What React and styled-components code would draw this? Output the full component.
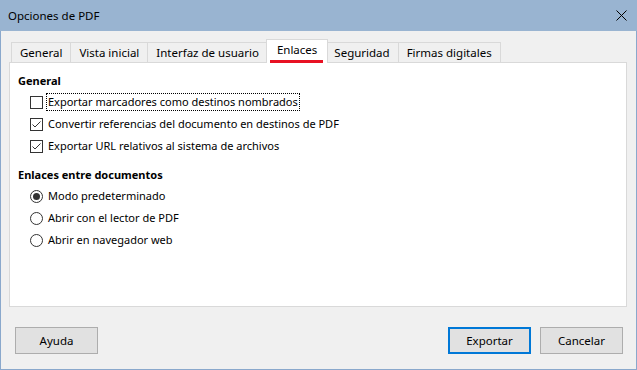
import React, { useState } from "react";
import styled, { createGlobalStyle, css } from "styled-components";

const Global = createGlobalStyle`
  html, body { margin: 0; padding: 0; background: #f0f0f0; }
  body { font-family: "Segoe UI", "Noto Sans", sans-serif; font-size: 11px; color: #000; }
  * { box-sizing: border-box; }
`;

const Window = styled.div`
  width: 637px;
  height: 370px;
  display: flex;
  flex-direction: column;
  background: #f0f0f0;
  border: 1px solid #8aa8cc;
  border-top: none;
`;

const TitleBar = styled.div`
  height: 31px;
  margin: 0 -1px;
  background: #99b4d1;
  display: flex;
  align-items: center;
  justify-content: space-between;
  padding: 0 10px 1px 8px;
`;

const Title = styled.span`
  font-size: 11.5px;
  color: #000;
`;

const CloseBtn = styled.div`
  width: 12px;
  height: 12px;
  display: flex;
  align-items: center;
  justify-content: center;
`;

const Body = styled.div`
  flex: 1;
  display: flex;
  flex-direction: column;
  padding: 8px 8px 0 8px;
`;

const TabBar = styled.div`
  height: 23px;
  display: flex;
  align-items: flex-end;
  padding-left: 2px;
  position: relative;
  z-index: 1;
`;

const Tab = styled.div`
  height: 20px;
  padding: 0 8px 1px;
  display: flex;
  align-items: center;
  justify-content: center;
  border: 1px solid #d9d9d9;
  border-bottom: none;
  border-left-width: ${(p) => (p.$first ? "1px" : "0")};
  background: #f0f0f0;
  font-size: 11.5px;
  color: #000;
  white-space: nowrap;
  position: relative;
  ${(p) =>
    p.$active &&
    css`
      height: 24px;
      margin-bottom: -1px;
      background: #fff;
      border-left-width: 1px;
      margin-left: -2px;
      margin-right: -2px;
      padding: 0 10px 4px;
      z-index: 2;
    `}
`;

const Underline = styled.span`
  position: absolute;
  left: 3px;
  right: 4px;
  bottom: 0;
  height: 3px;
  background: #e81123;
`;

const Pane = styled.div`
  height: 245px;
  margin-right: 1px;
  background: #fff;
  border: 1px solid #d9d9d9;
  padding: 9px 8px 0 8px;
  display: flex;
  flex-direction: column;
`;

const Heading = styled.div`
  font-weight: bold;
  height: 17px;
  line-height: 17px;
  margin-top: ${(p) => p.$mt || 0}px;
  margin-bottom: 2px;
`;

const Row = styled.label`
  display: flex;
  align-items: center;
  height: 22px;
  padding-left: 12px;
  gap: 5px;
`;

const Box = styled.span`
  width: 13px;
  height: 13px;
  border: 1px solid #333;
  background: #fff;
  display: flex;
  align-items: center;
  justify-content: center;
  flex: none;
`;

const Radio = styled.span`
  width: 13px;
  height: 13px;
  border: 1px solid #333;
  border-radius: 50%;
  background: #fff;
  display: flex;
  align-items: center;
  justify-content: center;
  flex: none;
  &::after {
    content: "";
    width: 7px;
    height: 7px;
    border-radius: 50%;
    background: ${(p) => (p.$on ? "#333" : "transparent")};
  }
`;

const Text = styled.span`
  padding: 0 1px;
  line-height: 16px;
  border: 1px dotted ${(p) => (p.$focus ? "#000" : "transparent")};
  margin-left: -2px;
`;

const Buttons = styled.div`
  display: flex;
  align-items: center;
  margin-top: 20px;
  padding: 0 5px 0 6px;
  gap: 9px;
`;

const Spacer = styled.div`
  flex: 1;
`;

const Button = styled.button`
  width: 83px;
  height: 27px;
  font-family: inherit;
  font-size: 11.5px;
  color: #000;
  background: #e1e1e1;
  border: 1px solid #adadad;
  padding: 0;
  ${(p) =>
    p.$default &&
    css`
      border: 2px solid #0078d7;
    `}
`;

function Check() {
  return (
    <svg width="11" height="11" viewBox="0 0 11 11">
      <path d="M1.5 5.5 L4 8 L9.5 2.5" fill="none" stroke="#333" strokeWidth="1" />
    </svg>
  );
}

const tabs = ["General", "Vista inicial", "Interfaz de usuario", "Enlaces", "Seguridad", "Firmas digitales"];

export default function App() {
  const [active] = useState(3);
  return (
    <>
      <Global />
      <Window>
        <TitleBar>
          <Title>Opciones de PDF</Title>
          <CloseBtn>
            <svg width="11" height="11" viewBox="0 0 11 11">
              <path d="M0.5 0.5 L10.5 10.5 M10.5 0.5 L0.5 10.5" stroke="#000" strokeWidth="1" />
            </svg>
          </CloseBtn>
        </TitleBar>
        <Body>
          <TabBar>
            {tabs.map((t, i) => (
              <Tab key={t} $first={i === 0} $active={i === active}>
                {t}
                {i === active && <Underline />}
              </Tab>
            ))}
          </TabBar>
          <Pane>
            <Heading>General</Heading>
            <Row>
              <Box />
              <Text $focus>Exportar marcadores como destinos nombrados</Text>
            </Row>
            <Row>
              <Box>
                <Check />
              </Box>
              <Text>Convertir referencias del documento en destinos de PDF</Text>
            </Row>
            <Row>
              <Box>
                <Check />
              </Box>
              <Text>Exportar URL relativos al sistema de archivos</Text>
            </Row>
            <Heading $mt={9}>Enlaces entre documentos</Heading>
            <Row>
              <Radio $on />
              <Text>Modo predeterminado</Text>
            </Row>
            <Row>
              <Radio />
              <Text>Abrir con el lector de PDF</Text>
            </Row>
            <Row>
              <Radio />
              <Text>Abrir en navegador web</Text>
            </Row>
          </Pane>
          <Buttons>
            <Button>Ayuda</Button>
            <Spacer />
            <Button $default>Exportar</Button>
            <Button>Cancelar</Button>
          </Buttons>
        </Body>
      </Window>
    </>
  );
}
